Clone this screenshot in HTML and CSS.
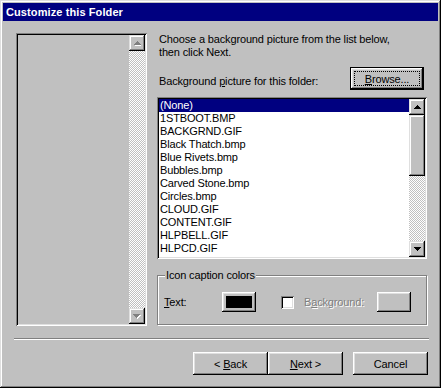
FILE: index.html
```html
<!DOCTYPE html>
<html lang="en">
<head>
    <meta charset="UTF-8">
    <title>Customize this Folder</title>
    <link rel="stylesheet" href="styles.css">
</head>
<body>
    <div class="window">
        <div class="titlebar">Customize this Folder</div>
        <div class="content">
            <div class="main">
                <!-- Preview pane -->
                <div class="preview sunken">
                    <div class="preview-area"></div>
                    <div class="scrollbar">
                        <div class="sb-btn">
                            <svg width="7" height="5" viewBox="0 0 7 5"><path fill="#fff" d="M4 1h1v1h-1z M3 2h3v1h-3z M2 3h5v1h-5z M1 4h6v1h-6z"/><path fill="#808080" d="M3 0h1v1h-1z M2 1h3v1h-3z M1 2h5v1h-5z M0 3h7v1h-7z"/></svg>
                        </div>
                        <div class="sb-track"></div>
                        <div class="sb-btn">
                            <svg width="8" height="5" viewBox="0 0 8 5"><path fill="#fff" d="M1 1h7v1h-7z M2 2h5v1h-5z M3 3h3v1h-3z M4 4h1v1h-1z"/><path fill="#808080" d="M0 0h7v1h-7z M1 1h5v1h-5z M2 2h3v1h-3z M3 3h1v1h-1z"/></svg>
                        </div>
                    </div>
                </div>

                <div class="side">
                    <p class="intro">Choose a background picture from the list below,<br>then click Next.</p>
                    <div class="browse-row">
                        <span class="label">Background <u>p</u>icture for this folder:</span>
                        <button class="btn default"><span class="focus"><u>B</u>rowse...</span></button>
                    </div>

                    <!-- Picture list -->
                    <div class="listbox sunken">
                        <ul class="items">
                            <li class="selected">(None)</li>
                            <li>1STBOOT.BMP</li>
                            <li>BACKGRND.GIF</li>
                            <li>Black Thatch.bmp</li>
                            <li>Blue Rivets.bmp</li>
                            <li>Bubbles.bmp</li>
                            <li>Carved Stone.bmp</li>
                            <li>Circles.bmp</li>
                            <li>CLOUD.GIF</li>
                            <li>CONTENT.GIF</li>
                            <li>HLPBELL.GIF</li>
                            <li>HLPCD.GIF</li>
                        </ul>
                        <div class="scrollbar">
                            <div class="sb-btn">
                                <svg width="7" height="4" viewBox="0 0 7 4"><path fill="#000" d="M3 0h1v1h-1z M2 1h3v1h-3z M1 2h5v1h-5z M0 3h7v1h-7z"/></svg>
                            </div>
                            <div class="sb-thumb"></div>
                            <div class="sb-track"></div>
                            <div class="sb-btn">
                                <svg width="7" height="4" viewBox="0 0 7 4"><path fill="#000" d="M0 0h7v1h-7z M1 1h5v1h-5z M2 2h3v1h-3z M3 3h1v1h-1z"/></svg>
                            </div>
                        </div>
                    </div>

                    <!-- Caption colors -->
                    <div class="group">
                        <span class="legend">Icon caption colors</span>
                        <div class="group-row">
                            <span class="text-label"><u>T</u>ext:</span>
                            <button class="btn color-btn"><span class="swatch"></span></button>
                            <span class="checkbox"></span>
                            <span class="disabled-label">B<u>a</u>ckground:</span>
                            <button class="btn color-btn" disabled></button>
                        </div>
                    </div>
                </div>
            </div>

            <div class="separator"></div>

            <div class="buttons">
                <button class="btn">&lt; <u>B</u>ack</button>
                <button class="btn"><u>N</u>ext &gt;</button>
                <button class="btn cancel">Cancel</button>
            </div>
        </div>
    </div>
</body>
</html>
```

FILE: styles.css
```css
* {
    margin: 0;
    padding: 0;
    box-sizing: border-box;
}

body {
    font-family: "Liberation Sans", Arial, sans-serif;
    font-size: 11px;
    letter-spacing: -0.15px;
    background-color: #c0c0c0;
    color: #000;
}

u {
    text-decoration: underline;
    text-underline-offset: 1px;
}

.window {
    width: 441px;
    height: 388px;
    padding: 3px;
    background-color: #c0c0c0;
    box-shadow: inset -1px -1px #000, inset 1px 1px #dfdfdf,
                inset -2px -2px #808080, inset 2px 2px #fff;
}

.titlebar {
    height: 18px;
    line-height: 18px;
    padding-left: 3px;
    background-color: #000080;
    color: #fff;
    font-weight: bold;
    letter-spacing: 0.1px;
}

.content {
    padding: 12px 10px 0 13px;
}

.main {
    display: flex;
    height: 293px;
}

.sunken {
    padding: 2px;
    box-shadow: inset 1px 1px #808080, inset -1px -1px #fff,
                inset 2px 2px #000, inset -2px -2px #dfdfdf;
}

/* Preview pane */
.preview {
    width: 131px;
    display: flex;
}

.preview-area {
    flex: 1;
}

.scrollbar {
    width: 16px;
    display: flex;
    flex-direction: column;
}

.sb-btn {
    height: 16px;
    display: flex;
    align-items: center;
    justify-content: center;
    background-color: #c0c0c0;
    box-shadow: inset -1px -1px #000, inset 1px 1px #dfdfdf,
                inset -2px -2px #808080, inset 2px 2px #fff;
}

.sb-btn svg {
    display: block;
}

.sb-track {
    flex: 1;
    background: repeating-conic-gradient(#c0c0c0 0 25%, #fff 0 50%) 0 0 / 2px 2px;
}

.sb-thumb {
    height: 61px;
    background-color: #c0c0c0;
    box-shadow: inset -1px -1px #000, inset 1px 1px #dfdfdf,
                inset -2px -2px #808080, inset 2px 2px #fff;
}

/* Right column */
.side {
    width: 270px;
    margin-left: 10px;
    display: flex;
    flex-direction: column;
}

.intro {
    padding-left: 2px;
    line-height: 13px;
    height: 26px;
}

.browse-row {
    margin-top: 8px;
    display: flex;
    align-items: flex-end;
    justify-content: space-between;
}

.label {
    padding-left: 2px;
    padding-bottom: 2px;
    line-height: 13px;
}

.btn {
    font-family: inherit;
    font-size: 11px;
    letter-spacing: -0.15px;
    color: #000;
    background-color: #c0c0c0;
    border: none;
    width: 75px;
    height: 23px;
    box-shadow: inset -1px -1px #000, inset 1px 1px #fff,
                inset -2px -2px #808080, inset 2px 2px #dfdfdf;
}

.btn.default {
    width: 74px;
    margin-right: 3px;
    border: 1px solid #000;
    padding: 3px;
}

.focus {
    display: flex;
    align-items: center;
    justify-content: center;
    height: 100%;
    border: 1px dotted #000;
}

/* Picture list */
.listbox {
    margin-top: 7px;
    height: 162px;
    display: flex;
    background-color: #fff;
}

.items {
    flex: 1;
    list-style: none;
}

.items li {
    height: 13px;
    line-height: 13px;
    padding-left: 1px;
    white-space: nowrap;
}

.items li.selected {
    background-color: #000080;
    color: #fff;
}

/* Caption colors */
.group {
    position: relative;
    margin-top: 16px;
    height: 50px;
    border: 1px solid #808080;
    box-shadow: inset 1px 1px #fff, 1px 1px #fff;
}

.legend {
    position: absolute;
    top: -7px;
    left: 7px;
    padding: 0 1px 0 1px;
    line-height: 13px;
    background-color: #c0c0c0;
}

.group-row {
    display: flex;
    align-items: center;
    padding: 16px 0 0 6px;
}

.text-label {
    width: 58px;
}

.color-btn {
    width: 34px;
    height: 20px;
    display: flex;
    align-items: center;
    justify-content: center;
}

.swatch {
    width: 26px;
    height: 12px;
    background-color: #000;
}

.checkbox {
    width: 13px;
    height: 13px;
    margin-left: 25px;
    background-color: #fff;
    box-shadow: inset 1px 1px #808080, inset -1px -1px #fff,
                inset 2px 2px #000, inset -2px -2px #dfdfdf;
}

.disabled-label {
    margin-left: 10px;
    width: 73px;
    color: #808080;
    text-shadow: 1px 1px #fff;
}

/* Bottom */
.separator {
    margin: 12px -1px 0 -2px;
    height: 2px;
    border-top: 1px solid #808080;
    border-bottom: 1px solid #fff;
}

.buttons {
    margin-top: 12px;
    display: flex;
    justify-content: flex-end;
}

.cancel {
    margin-left: 10px;
}
```
